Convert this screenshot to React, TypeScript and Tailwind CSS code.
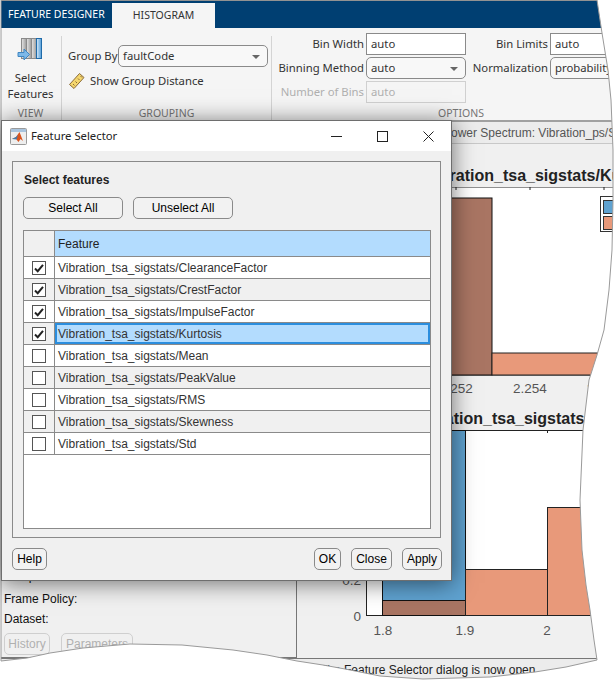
import React from 'react';

const features = [
  { name: 'ClearanceFactor', checked: true },
  { name: 'CrestFactor', checked: true },
  { name: 'ImpulseFactor', checked: true },
  { name: 'Kurtosis', checked: true, selected: true },
  { name: 'Mean', checked: false },
  { name: 'PeakValue', checked: false },
  { name: 'RMS', checked: false },
  { name: 'Skewness', checked: false },
  { name: 'Std', checked: false },
];

// the torn page edge, as seen in the picture
const tornEdge =
  '1,0 597,0 602,33 608,70 611,100 613,150 613,200 612,250 609,290 604,330 597,355 589,380 583,430 580,500 582,550 586,585 590,610 594,640 597,660 ' +
  '566,667 535,672 490,677 423,679 380,676 345,669 323,665 297,661 267,655 233,650 182,645 130,644 83,648 50,653 27,658 1,661';

function Field({ value, disabled }: { value: string; disabled?: boolean }) {
  return (
    <div
      className={`w-[100px] h-[22px] px-[4px] pt-[1px] border flex items-center ${
        disabled ? 'border-[#d0d0d0] bg-[#f5f5f5] text-[#b0b0b0]' : 'border-[#8a8a8a] bg-white text-[#333]'
      }`}
    >
      {value}
    </div>
  );
}

function Combo({ value, width }: { value: string; width: string }) {
  return (
    <div className={`${width} h-[22px] pl-[4px] pr-[7px] pt-[1px] border border-[#8a8a8a] rounded-[5px] bg-[#f8f8f8] flex items-center justify-between overflow-hidden whitespace-nowrap`}>
      <span>{value}</span>
      <span className="w-0 h-0 border-x-[4px] border-x-transparent border-t-[4px] border-t-[#666]" />
    </div>
  );
}

function Caption({ text }: { text: string }) {
  return <div className="mt-auto h-[14px] leading-[14px] text-center text-[10.5px] text-[#777]">{text}</div>;
}

function SelectFeaturesIcon() {
  return (
    <svg width="26" height="24" viewBox="0 0 26 24">
      <defs>
        <linearGradient id="col" x1="0" x2="1" y1="0" y2="0">
          <stop offset="0" stopColor="#e6e6e6" />
          <stop offset="1" stopColor="#9a9a9a" />
        </linearGradient>
        <linearGradient id="blue" x1="0" x2="1" y1="0" y2="0">
          <stop offset="0" stopColor="#d8ecfb" />
          <stop offset="1" stopColor="#4f9ad6" />
        </linearGradient>
      </defs>
      <rect x="4.5" y="0.5" width="5" height="20" fill="url(#col)" stroke="#8a8a8a" />
      <rect x="9.5" y="0.5" width="5" height="20" fill="url(#col)" stroke="#8a8a8a" />
      <rect x="14.5" y="0.5" width="5" height="20" fill="url(#col)" stroke="#8a8a8a" />
      <rect x="19.5" y="0.5" width="5" height="20" fill="url(#blue)" stroke="#1f6aa8" />
      <path d="M1 14.5h6v-3.5l5.5 5.5-5.500 5.500v-3.500h-6z" fill="#7db8e8" stroke="#3f86c2" />
    </svg>
  );
}

function RulerIcon() {
  return (
    <svg width="17" height="18" viewBox="0 0 17 18">
      <path d="M1.5 12.5 11.5 1.500 16 5.500 6 16.500z" fill="#f5d76e" stroke="#8a6a3a" />
      <path d="M5 12l1.500 1.500M7.500 9.500 9 11M10 6.500l1.500 1.500M12.500 4l1.500 1.500" stroke="#8a6a3a" fill="none" />
    </svg>
  );
}

function MatlabIcon() {
  return (
    <svg width="17" height="17" viewBox="0 0 17 17">
      <rect x="0.5" y="0.5" width="16" height="16" rx="1" fill="#eeeeee" stroke="#9a9a9a" />
      <rect x="1" y="1" width="15" height="3" fill="#a9c4de" />
      <path d="M2 11 6 9 9.500 4 13 13 10.500 11 8.500 14 6 11z" fill="#d9541e" />
      <path d="M2 11 6 9 8 7 6.500 11.500z" fill="#3e7cb1" />
    </svg>
  );
}

function WindowButtons() {
  return (
    <div className="flex items-center mr-[17px] gap-[35px]">
      <svg width="11" height="11" viewBox="0 0 11 11">
        <path d="M0 5.500h11" stroke="#222" />
      </svg>
      <svg width="11" height="11" viewBox="0 0 11 11">
        <rect x="0.5" y="0.5" width="10" height="10" fill="none" stroke="#222" />
      </svg>
      <svg width="11" height="11" viewBox="0 0 11 11">
        <path d="M0.500 0.500l10 10M10.500 0.500l-10 10" stroke="#222" />
      </svg>
    </div>
  );
}

function DlgButton({ label, width }: { label: string; width: string }) {
  return (
    <div className={`${width} h-[22px] border border-[#8a8a8a] rounded-[5px] bg-[#f2f2f2] flex items-center justify-center text-black`}>
      {label}
    </div>
  );
}

function Checkbox({ checked }: { checked: boolean }) {
  return (
    <svg width="14" height="14" viewBox="0 0 14 14">
      <rect x="0.5" y="0.5" width="13" height="13" fill="#fff" stroke="#555" />
      {checked && <path d="M3 7.500 5.700 10.200 11 3.800" fill="none" stroke="#222" strokeWidth="2" />}
    </svg>
  );
}

function FeatureDialog() {
  return (
    <div className="absolute left-[1px] top-[120px] w-[451px] h-[461px] z-10 flex flex-col bg-[#f0f0f0] border border-[#6e6e6e] font-['Liberation_Sans',sans-serif] text-[12px] shadow-[0_2px_22px_rgba(0,0,0,0.55)]">
      <div className="h-[30px] bg-white flex items-center justify-between pl-[8px] font-['Noto_Sans',sans-serif] text-[11.3px] text-[#222]">
        <div className="flex items-center gap-[4px]">
          <MatlabIcon />
          <span>Feature Selector</span>
        </div>
        <WindowButtons />
      </div>
      <div className="mx-[10px] mt-[10px] h-[377px] border border-[#8a8a8a] px-[10px] pt-[11px] flex flex-col">
        <div className="ml-[1px] font-bold leading-[14px] text-[#222]">Select features</div>
        <div className="flex gap-[10px] mt-[10px]">
          <DlgButton label="Select All" width="w-[100px]" />
          <DlgButton label="Unselect All" width="w-[100px]" />
        </div>
        <div className="mt-[11px] w-[408px] h-[299px] border border-[#8a8a8a] bg-white">
          <div className="flex h-[26px] border-b border-[#8a8a8a]">
            <div className="w-[31px] bg-[#f0f0f0] border-r border-[#8a8a8a]" />
            <div className="flex-1 bg-[#b3dcfe] flex items-center pl-[3px] text-[#222]">Feature</div>
          </div>
          {features.map((f, i) => (
            <div key={f.name} className={`flex h-[22px] border-b border-[#8a8a8a] ${i % 2 ? 'bg-[#f0f0f0]' : 'bg-white'}`}>
              <div className="w-[31px] border-r border-[#8a8a8a] flex items-center justify-center">
                <Checkbox checked={f.checked} />
              </div>
              <div
                className={`flex-1 flex items-center text-[#333] ${
                  f.selected ? 'bg-[#b3dcfe] border-2 border-[#2b8ede] pl-[1px]' : 'pl-[3px]'
                }`}
              >
                Vibration_tsa_sigstats/{f.name}
              </div>
            </div>
          ))}
        </div>
      </div>
      <div className="flex justify-between ml-[10px] mr-[9px] mt-[10px]">
        <DlgButton label="Help" width="w-[35px]" />
        <div className="flex gap-[10px]">
          <DlgButton label="OK" width="w-[27px]" />
          <DlgButton label="Close" width="w-[41px]" />
          <DlgButton label="Apply" width="w-[40px]" />
        </div>
      </div>
    </div>
  );
}

const SALMON = '#e8997a';
const BROWN = '#a97563';
const BLUE = '#5fa2d0';

function TopPlot() {
  // x and y here are page x - 297 and page y - 187
  return (
    <svg width="319" height="214" className="block font-['Liberation_Sans',sans-serif]">
      <rect x="69" y="0" width="250" height="188" fill="#fff" stroke="#222" />
      <rect x="70" y="11" width="125" height="177" fill={BROWN} stroke="#111" />
      <rect x="195" y="166" width="124" height="22" fill={SALMON} stroke="#222" />
      <path d="M159 0v3M233 0v3M307 0v3" stroke="#222" />
      <rect x="303.500" y="9.500" width="40" height="35" fill="#fff" stroke="#333" />
      <rect x="306.500" y="13.500" width="30" height="13" fill={BLUE} stroke="#333" />
      <rect x="306.500" y="29.500" width="30" height="13" fill={SALMON} stroke="#333" />
      <g fill="#555" fontSize="13.5" textAnchor="middle">
        <text x="159" y="206">2.252</text>
        <text x="233" y="206">2.254</text>
        <text x="307" y="206">2.256</text>
      </g>
    </svg>
  );
}

function BottomPlot() {
  // x here is page x - 297, y is page y - 430
  return (
    <svg width="319" height="228" className="block font-['Liberation_Sans',sans-serif]">
      <rect x="69.500" y="0.500" width="250" height="185" fill="#fff" stroke="#222" />
      <rect x="85.500" y="0.500" width="83" height="170" fill={BLUE} stroke="#111" />
      <rect x="85.500" y="170.500" width="83" height="15" fill={BROWN} stroke="#111" />
      <rect x="168.500" y="139.500" width="82" height="46" fill={SALMON} stroke="#222" />
      <rect x="250.500" y="77.500" width="82" height="108" fill={SALMON} stroke="#222" />
      <path d="M250.500 0v3" stroke="#222" />
      <g fill="#555" fontSize="13.5">
        <text x="64" y="191" textAnchor="end">0</text>
        <text x="64" y="155" textAnchor="end">0.2</text>
        <g textAnchor="middle">
          <text x="86" y="205">1.8</text>
          <text x="168" y="205">1.9</text>
          <text x="250" y="205">2</text>
        </g>
      </g>
    </svg>
  );
}

export default function App() {
  return (
    <div className="relative w-[616px] h-[680px] overflow-hidden bg-white flex flex-col font-['Noto_Sans',sans-serif] text-[11.3px] text-[#333]">
      {/* tab strip */}
      <div className="h-[28px] bg-[#003f72] flex border-t border-[#8a8a8a] text-[10.5px]">
        <div className="w-[112px] shrink-0 pl-[8px] flex items-center whitespace-nowrap text-white">FEATURE DESIGNER</div>
        <div className="w-[103px] shrink-0 mt-[2px] bg-[#f5f5f5] flex items-center justify-center text-[#333]">HISTOGRAM</div>
      </div>

      {/* ribbon */}
      <div className="h-[92px] bg-[#f5f5f5] flex">
        <div className="w-[62px] shrink-0 mt-[8px] border-r border-[#d4d4d4] flex flex-col items-center">
          <div className="mt-[2px] mr-[2px]">
            <SelectFeaturesIcon />
          </div>
          <div className="mt-[8px] text-center leading-[16px]">
            Select
            <br />
            Features
          </div>
          <Caption text="VIEW" />
        </div>
        <div className="w-[210px] shrink-0 mt-[8px] border-r border-[#d4d4d4] flex flex-col">
          <div className="flex items-center pt-[9px] pl-[6px] gap-[1px]">
            <span className="w-[49px] pt-[1px] whitespace-nowrap">Group By</span>
            <Combo value="faultCode" width="w-[150px]" />
          </div>
          <div className="flex items-center gap-[5px] pl-[6px] mt-[5px]">
            <RulerIcon />
            <span>Show Group Distance</span>
          </div>
          <Caption text="GROUPING" />
        </div>
        <div className="w-[378px] shrink-0 flex flex-col pt-[5px]">
          <div className="grid grid-cols-[92px_100px_80px_100px] gap-x-[2px] gap-y-[2px] items-center [&>span]:pt-[1px]">
            <span className="text-right">Bin Width</span>
            <Field value="auto" />
            <span className="text-right">Bin Limits</span>
            <Field value="auto" />
            <span className="text-right whitespace-nowrap">Binning Method</span>
            <Combo value="auto" width="w-[100px]" />
            <span className="text-right whitespace-nowrap">Normalization</span>
            <Combo value="probability" width="w-[100px]" />
            <span className="text-right whitespace-nowrap text-[#b0b0b0]">Number of Bins</span>
            <Field value="auto" disabled />
          </div>
          <Caption text="OPTIONS" />
        </div>
      </div>

      {/* work area */}
      <div className="flex-1 flex border-t-2 border-[#a0a0a0] font-['Liberation_Sans',sans-serif] text-[12px] text-[#111]">
        <div className="w-[297px] shrink-0 bg-[#f0f0f0] border-r border-b border-[#777] flex flex-col justify-end pl-[4px] pb-[2px]">
          <div className="mb-[2px] leading-[21px]">Sample Rate:</div>
          <div className="leading-[20px]">Frame Policy:</div>
          <div className="leading-[20px]">Dataset:</div>
          <div className="flex gap-[11px] mt-[4px] text-[#b0b0b0]">
            <div className="w-[46px] h-[22px] border border-[#cfcfcf] rounded-[5px] flex items-center justify-center">History</div>
            <div className="w-[72px] h-[22px] border border-[#cfcfcf] rounded-[5px] flex items-center justify-center">Parameters</div>
          </div>
        </div>
        <div className="flex-1 min-w-0 bg-[#f0f0f0] flex flex-col overflow-hidden">
          <div className="h-[22px] shrink-0 border-b border-[#c8c8c8] pl-[146px] flex items-center whitespace-nowrap text-[#555] bg-[#ececec]">
            Power Spectrum: Vibration_ps/SpectrumData
          </div>
          <div className="h-[43px] shrink-0 pl-[128px] pb-[2px] flex items-end whitespace-nowrap text-[16px] leading-[18px] font-bold text-[#222]">
            Vibration_tsa_sigstats/Kurtosis
          </div>
          <TopPlot />
          <div className="h-[29px] shrink-0 pl-[117px] pb-[2px] flex items-end whitespace-nowrap text-[16px] leading-[18px] font-bold text-[#222]">
            Vibration_tsa_sigstats/Mean
          </div>
          <BottomPlot />
        </div>
      </div>

      {/* status bar */}
      <div className="h-[22px] bg-[#ececec] border-t border-[#777] pl-[320px] pt-[2px] font-['Liberation_Sans',sans-serif] text-[12px] leading-[18px] text-[#222] whitespace-nowrap">
        The Feature Selector dialog is now open
      </div>

      <FeatureDialog />

      {/* torn paper edge over the app */}
      <svg width="616" height="680" className="absolute left-0 top-0 pointer-events-none">
        <path d={`M0 0H616V680H0Z M${tornEdge}Z`} fill="#fff" fillRule="evenodd" />
        <polygon points={tornEdge} fill="none" stroke="#9a9a9a" />
      </svg>
    </div>
  );
}
